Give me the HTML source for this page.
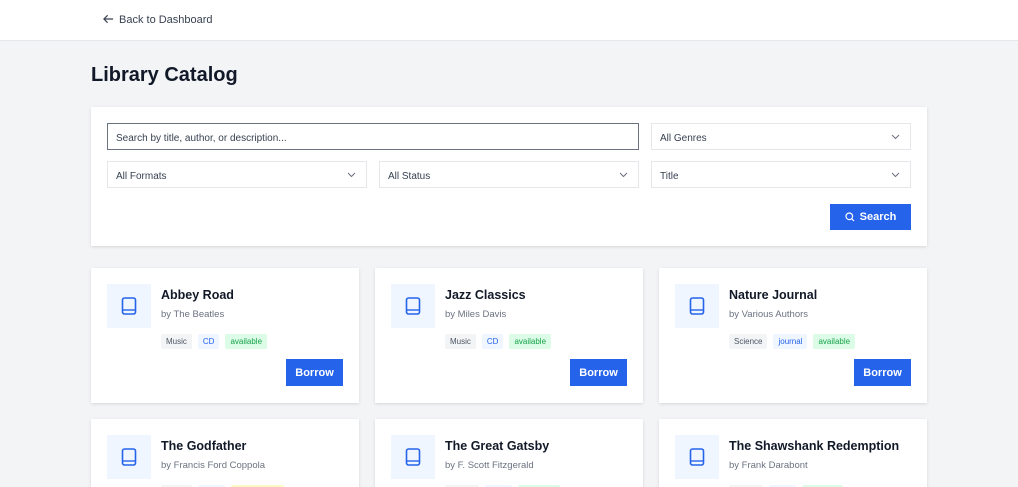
<!DOCTYPE html><html><head><style>
*{box-sizing:border-box;margin:0;padding:0}
html,body{width:1018px;height:487px;overflow:hidden}
body{background:#f3f4f6;font-family:"Liberation Sans",sans-serif;color:#111827;position:relative}
.hdr{position:absolute;left:0;top:0;width:1018px;height:41px;background:#fff;border-bottom:1px solid #e5e7eb}
.back{position:absolute;left:103px;top:14px;font-size:11px;color:#374151}
h1{position:absolute;left:91px;top:64px;font-size:20px;font-weight:bold}
.panel{position:absolute;left:91px;top:107px;width:836px;height:139px;background:#fff;box-shadow:0 1px 3px rgba(0,0,0,.12)}
.f{position:absolute;height:27px;border:1px solid #e5e7eb;font-size:10px;color:#374151;padding:9px 8px 0;background:#fff}
.f.s{border:1px solid #6b7280}
.chev{position:absolute;right:10px;top:10px}
.btn{position:absolute;background:#2563eb;color:#fff;font-size:11px;font-weight:bold;display:flex;align-items:center;justify-content:center;gap:5px}
.card{position:absolute;width:268px;height:135px;background:#fff;box-shadow:0 1px 3px rgba(0,0,0,.12)}
.ic{position:absolute;left:16px;top:16px;width:44px;height:44px;background:#eff6ff;display:flex;align-items:center;justify-content:center}
.t{position:absolute;left:70px;top:20px;font-size:12.5px;font-weight:bold}
.a{position:absolute;left:70px;top:41px;font-size:9.5px;color:#6b7280}
.tags{position:absolute;left:70px;top:66px;display:flex;gap:6px}
.tag{font-size:8px;padding:3px 5px;border-radius:2px}
</style></head><body>
<div class="hdr"><div class="back"><svg width="11" height="10" viewBox="0 0 12 10" style="vertical-align:-1px;margin-right:5px"><path d="M11 5H1M5 1L1 5l4 4" stroke="#374151" stroke-width="1.3" fill="none"/></svg>Back to Dashboard</div></div>
<h1>Library Catalog</h1>
<div class="panel">
<div class="f s" style="left:16px;top:16px;width:532px">Search by title, author, or description...</div>
<div class="f" style="left:560px;top:16px;width:260px">All Genres<svg class="chev" width="9" height="6" viewBox="0 0 9 6"><path d="M1 1l3.5 3.5L8 1" stroke="#6b7280" fill="none"/></svg></div>
<div class="f" style="left:16px;top:54px;width:260px">All Formats<svg class="chev" width="9" height="6" viewBox="0 0 9 6"><path d="M1 1l3.5 3.5L8 1" stroke="#6b7280" fill="none"/></svg></div>
<div class="f" style="left:288px;top:54px;width:260px">All Status<svg class="chev" width="9" height="6" viewBox="0 0 9 6"><path d="M1 1l3.5 3.5L8 1" stroke="#6b7280" fill="none"/></svg></div>
<div class="f" style="left:560px;top:54px;width:260px">Title<svg class="chev" width="9" height="6" viewBox="0 0 9 6"><path d="M1 1l3.5 3.5L8 1" stroke="#6b7280" fill="none"/></svg></div>
<div class="btn" style="left:739px;top:97px;width:81px;height:26px"><svg width="10" height="10" viewBox="0 0 10 10"><circle cx="4.3" cy="4.3" r="3.3" stroke="#fff" stroke-width="1.2" fill="none"/><path d="M6.8 6.8L9 9" stroke="#fff" stroke-width="1.2"/></svg>Search</div>
</div>
<div class="card" style="left:91px;top:268px"><div class="ic"><svg width="16" height="18" viewBox="0 0 16 18"><rect x="1.5" y="1" width="13" height="16" rx="2" stroke="#2563eb" stroke-width="1.6" fill="none"/><path d="M1.5 13h13" stroke="#2563eb" stroke-width="1.4"/></svg></div><div class="t">Abbey Road</div><div class="a">by The Beatles</div><div class="tags"><span class="tag" style="background:#f3f4f6;color:#4b5563">Music</span><span class="tag" style="background:#eff6ff;color:#2563eb">CD</span><span class="tag" style="background:#dcfce7;color:#16a34a">available</span></div><div class="btn" style="left:195px;top:91px;width:57px;height:27px">Borrow</div></div>
<div class="card" style="left:375px;top:268px"><div class="ic"><svg width="16" height="18" viewBox="0 0 16 18"><rect x="1.5" y="1" width="13" height="16" rx="2" stroke="#2563eb" stroke-width="1.6" fill="none"/><path d="M1.5 13h13" stroke="#2563eb" stroke-width="1.4"/></svg></div><div class="t">Jazz Classics</div><div class="a">by Miles Davis</div><div class="tags"><span class="tag" style="background:#f3f4f6;color:#4b5563">Music</span><span class="tag" style="background:#eff6ff;color:#2563eb">CD</span><span class="tag" style="background:#dcfce7;color:#16a34a">available</span></div><div class="btn" style="left:195px;top:91px;width:57px;height:27px">Borrow</div></div>
<div class="card" style="left:659px;top:268px"><div class="ic"><svg width="16" height="18" viewBox="0 0 16 18"><rect x="1.5" y="1" width="13" height="16" rx="2" stroke="#2563eb" stroke-width="1.6" fill="none"/><path d="M1.5 13h13" stroke="#2563eb" stroke-width="1.4"/></svg></div><div class="t">Nature Journal</div><div class="a">by Various Authors</div><div class="tags"><span class="tag" style="background:#f3f4f6;color:#4b5563">Science</span><span class="tag" style="background:#eff6ff;color:#2563eb">journal</span><span class="tag" style="background:#dcfce7;color:#16a34a">available</span></div><div class="btn" style="left:195px;top:91px;width:57px;height:27px">Borrow</div></div>
<div class="card" style="left:91px;top:419px"><div class="ic"><svg width="16" height="18" viewBox="0 0 16 18"><rect x="1.5" y="1" width="13" height="16" rx="2" stroke="#2563eb" stroke-width="1.6" fill="none"/><path d="M1.5 13h13" stroke="#2563eb" stroke-width="1.4"/></svg></div><div class="t">The Godfather</div><div class="a">by Francis Ford Coppola</div><div class="tags"><span class="tag" style="background:#f3f4f6;color:#4b5563">Movie</span><span class="tag" style="background:#eff6ff;color:#2563eb">DVD</span><span class="tag" style="background:#fef9c3;color:#ca8a04">checked out</span></div></div>
<div class="card" style="left:375px;top:419px"><div class="ic"><svg width="16" height="18" viewBox="0 0 16 18"><rect x="1.5" y="1" width="13" height="16" rx="2" stroke="#2563eb" stroke-width="1.6" fill="none"/><path d="M1.5 13h13" stroke="#2563eb" stroke-width="1.4"/></svg></div><div class="t">The Great Gatsby</div><div class="a">by F. Scott Fitzgerald</div><div class="tags"><span class="tag" style="background:#f3f4f6;color:#4b5563">Fiction</span><span class="tag" style="background:#eff6ff;color:#2563eb">book</span><span class="tag" style="background:#dcfce7;color:#16a34a">available</span></div></div>
<div class="card" style="left:659px;top:419px"><div class="ic"><svg width="16" height="18" viewBox="0 0 16 18"><rect x="1.5" y="1" width="13" height="16" rx="2" stroke="#2563eb" stroke-width="1.6" fill="none"/><path d="M1.5 13h13" stroke="#2563eb" stroke-width="1.4"/></svg></div><div class="t">The Shawshank Redemption</div><div class="a">by Frank Darabont</div><div class="tags"><span class="tag" style="background:#f3f4f6;color:#4b5563">Drama</span><span class="tag" style="background:#eff6ff;color:#2563eb">DVD</span><span class="tag" style="background:#dcfce7;color:#16a34a">available</span></div></div>
</body></html>
